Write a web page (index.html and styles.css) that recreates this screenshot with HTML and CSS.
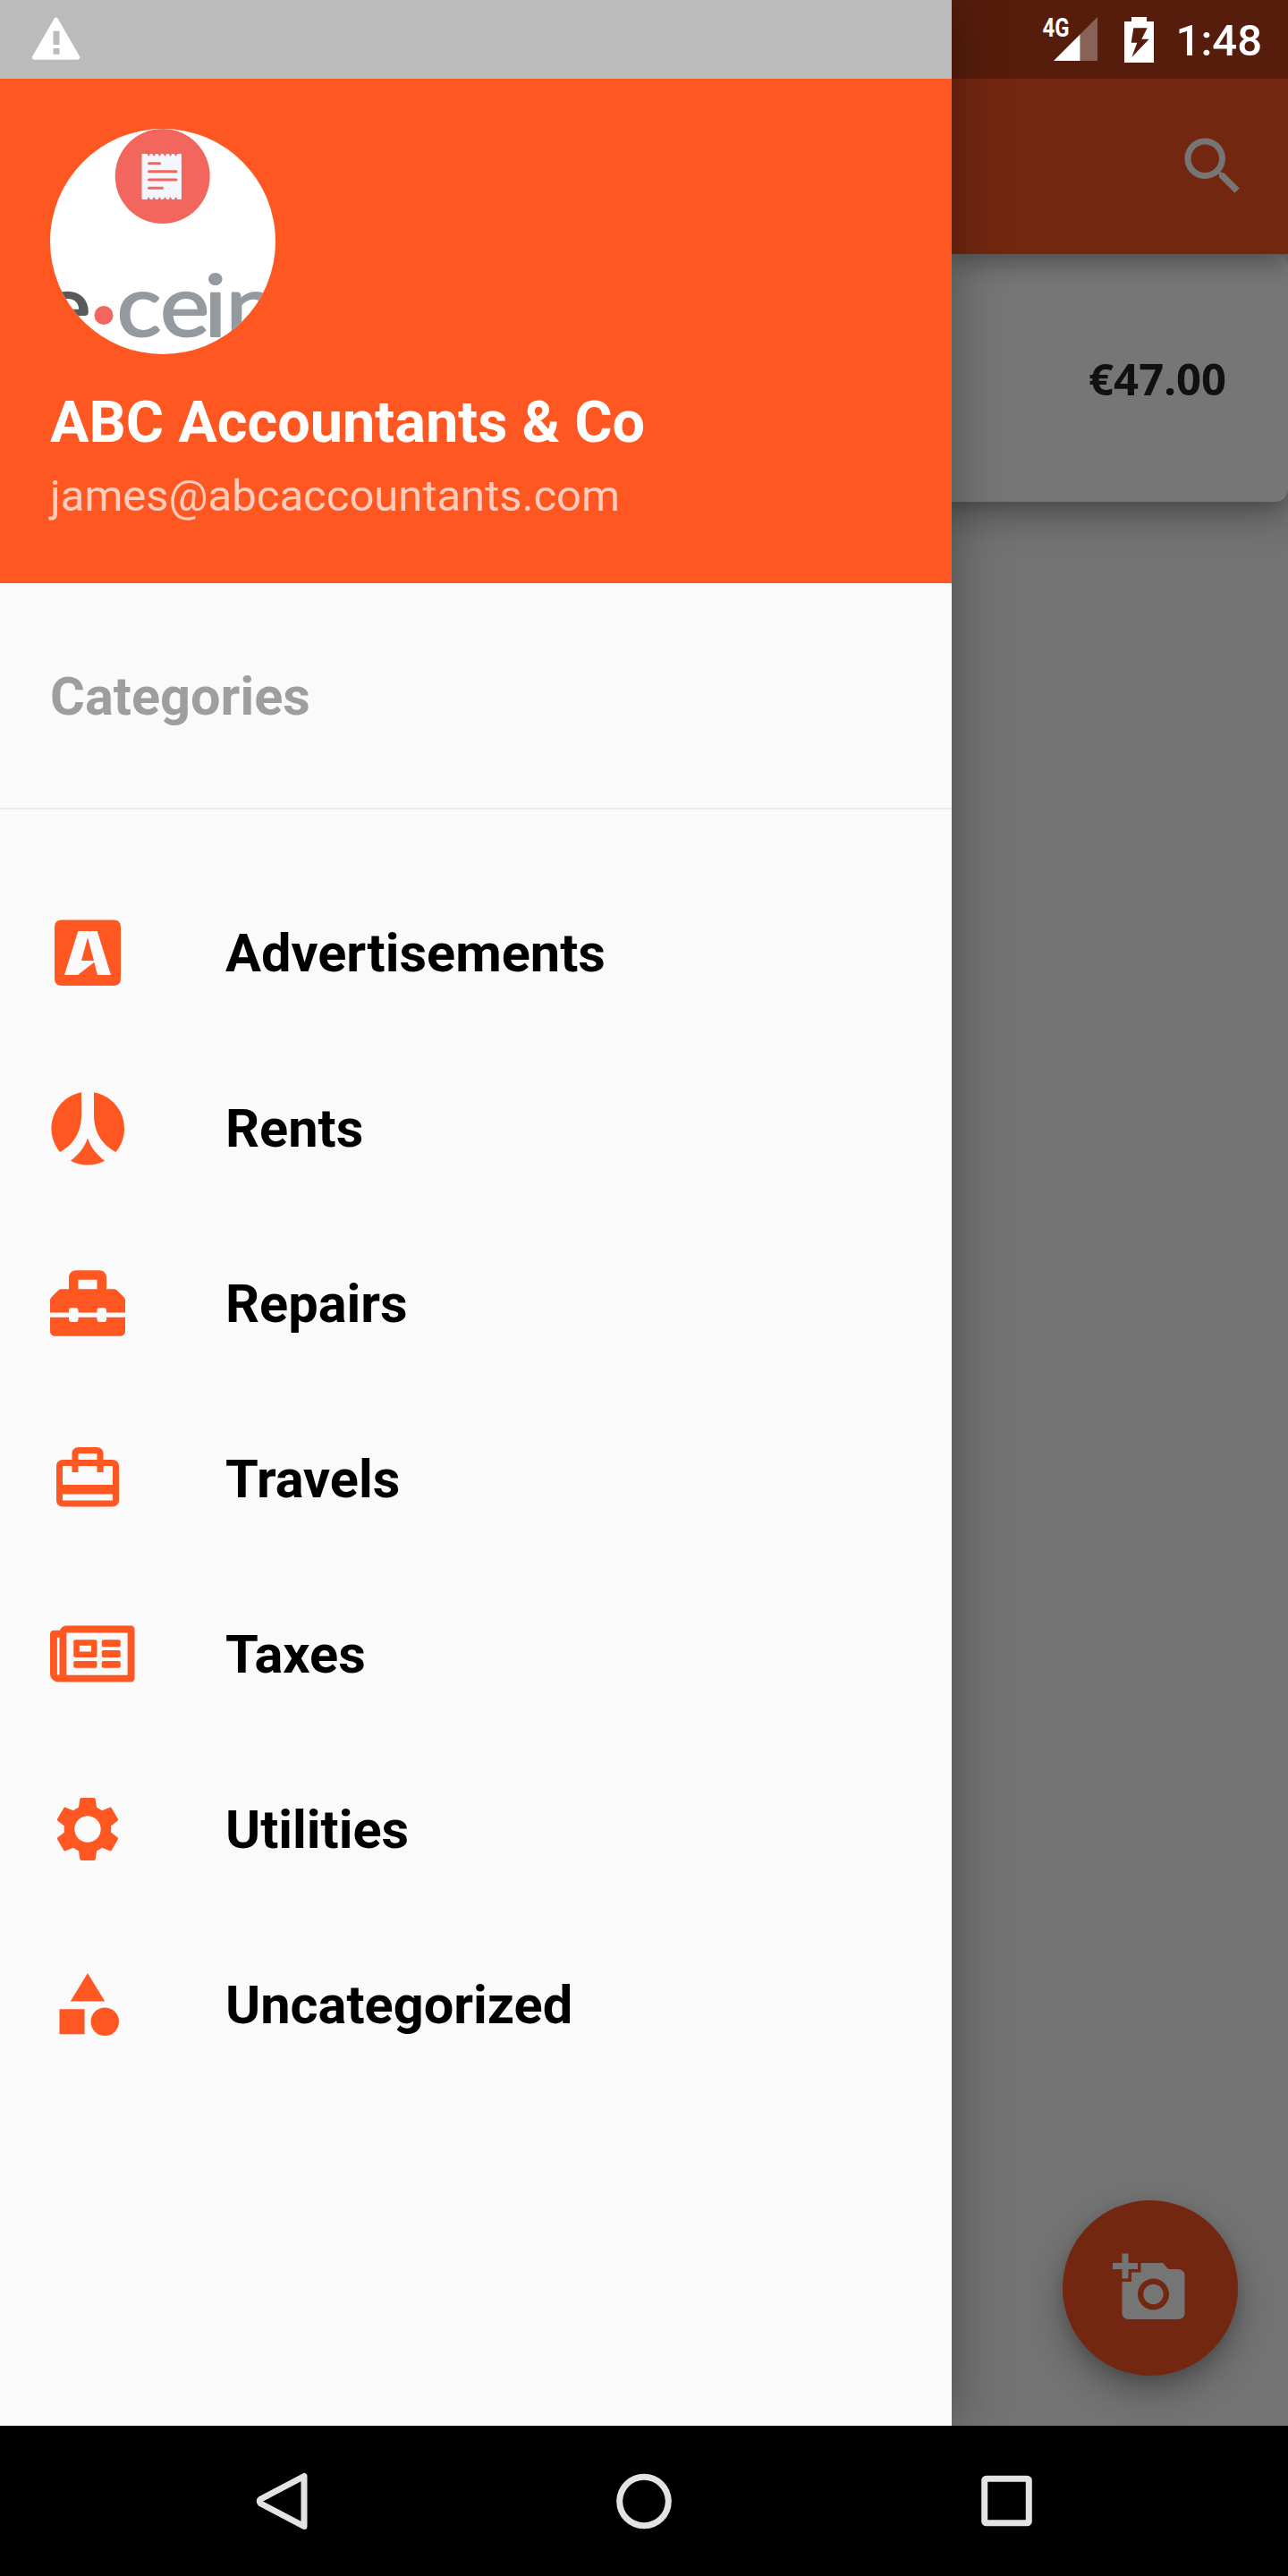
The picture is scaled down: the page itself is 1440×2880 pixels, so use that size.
FILE: index.html
```html
<!DOCTYPE html>
<html lang="en">
<head>
<meta charset="utf-8">
<title>Categories</title>
<link rel="stylesheet" href="styles.css">
</head>
<body>
<div class="screen">
  <div class="stage">
    <aside class="drawer">
      <header class="account">
        <svg class="avatar" viewBox="56 144 252 252">
          <defs><clipPath id="round"><circle cx="182" cy="270" r="126"/></clipPath></defs>
          <circle cx="182" cy="270" r="126" fill="#fff"/>
          <g clip-path="url(#round)">
            <circle cx="181.700" cy="197" r="53" fill="#f2665e"/>
            <path fill="#f3f6fc" d="M159.500 172h5l1.700 3 1.700-3h2.500l1.800 3 1.800-3h2.500l1.800 3 1.800-3h2.500l1.800 3 1.800-3h2.500l1.800 3 1.800-3h2.500l1.800 3 1.700-3h3.600q1 0 1 1v49q0 1-1 1h-3.600l-1.700-3-1.800 3h-2.500l-1.800-3-1.800 3h-2.500l-1.800-3-1.800 3h-2.500l-1.800-3-1.800 3h-2.500l-1.800-3-1.800 3h-2.500l-1.700-3-1.700 3h-5q-1 0-1-1v-49q0-1 1-1z"/>
            <path stroke="#f2665e" stroke-width="3" stroke-linecap="round" d="M166.500 182.700h12M166.500 191.700h30.500M166.500 201h30.500M166.500 210.300h15"/>
            <text class="logo logo-dark" transform="scale(1.1 1)" x="42.300" y="376.500">e</text>
            <circle cx="116" cy="352.500" r="10.500" fill="#f2665e"/>
            <text class="logo" transform="scale(1.1 1)" x="118.700 162.700 207.500 229.600" y="376.500">ceip</text>
          </g>
        </svg>
        <div class="name">ABC Accountants &amp; Co</div>
        <div class="email">james@abcaccountants.com</div>
      </header>
      <h2 class="section">Categories</h2>
      <nav class="list">
        <a class="item"><svg class="icon" viewBox="0 0 84 84"><path fill-rule="evenodd" d="M13 5.500h58q8 0 8 8v57.500q0 8-8 8H13q-8 0-8-8V13.500q0-8 8-8zM31.300 18L16 67h15l18.300-14.300L53 67h15L52.700 18zM42 25.300L49 51H35z"/></svg><span class="label">Advertisements</span></a>
        <a class="item"><svg class="icon" viewBox="0 0 84 84"><path d="M35 2.300V27.500C35 45.500 27 60.500 11 69A41 41 0 0 1 35 2.300zM49 2.300V27.500C49 45.500 57 60.500 73.500 69A41 41 0 0 0 49 2.300zM42 53.500C45 63 52 72 61.200 78.800A41 41 0 0 1 22.800 78.800C32 72 39 63 42 53.500z"/></svg><span class="label">Rents</span></a>
        <a class="item"><svg class="icon" viewBox="0 0 512 512"><path d="M502.630 214.630l-45.250-45.250c-6-6-14.140-9.370-22.630-9.370H384V80c0-26.510-21.490-48-48-48H176c-26.510 0-48 21.490-48 48v80H77.250c-8.490 0-16.620 3.370-22.630 9.370L9.370 214.630c-6 6-9.370 14.140-9.370 22.630V320h128v-16c0-8.840 7.160-16 16-16h32c8.840 0 16 7.160 16 16v16h128v-16c0-8.840 7.160-16 16-16h32c8.840 0 16 7.160 16 16v16h128v-82.750c0-8.480-3.370-16.620-9.370-22.620zM320 160H192V96h128v64zm64 208c0 8.840-7.160 16-16 16h-32c-8.840 0-16-7.160-16-16v-16H192v16c0 8.840-7.160 16-16 16h-32c-8.840 0-16-7.160-16-16v-16H0v96c0 17.670 14.330 32 32 32h448c17.670 0 32-14.330 32-32v-96H384v16z"/></svg><span class="label">Repairs</span></a>
        <a class="item"><svg class="icon" viewBox="0 0 24 24"><path d="M20 6h-3V4c0-1.110-.89-2-2-2H9c-1.110 0-2 .89-2 2v2H4c-1.110 0-2 .89-2 2v11c0 1.110.89 2 2 2h16c1.110 0 2-.89 2-2V8c0-1.110-.89-2-2-2zM9 4h6v2H9V4zm11 15H4v-2h16v2zm0-5H4V8h3v2h2V8h6v2h2V8h3v6z"/></svg><span class="label">Travels</span></a>
        <a class="item"><svg class="icon" viewBox="0 0 512 512"><path d="M552 64H112c-20.858 0-38.643 13.377-45.248 32H24c-13.255 0-24 10.745-24 24v272c0 30.928 25.072 56 56 56h496c13.255 0 24-10.745 24-24V88c0-13.255-10.745-24-24-24zM48 392V144h16v248c0 4.411-3.589 8-8 8s-8-3.589-8-8zm480 8H111.422c.374-2.614.578-5.283.578-8V112h416v288zM172 280h136c6.627 0 12-5.373 12-12v-96c0-6.627-5.373-12-12-12H172c-6.627 0-12 5.373-12 12v96c0 6.627 5.373 12 12 12zm28-80h80v40h-80v-40zm-40 140v-24c0-6.627 5.373-12 12-12h136c6.627 0 12 5.373 12 12v24c0 6.627-5.373 12-12 12H172c-6.627 0-12-5.373-12-12zm192 0v-24c0-6.627 5.373-12 12-12h104c6.627 0 12 5.373 12 12v24c0 6.627-5.373 12-12 12H364c-6.627 0-12-5.373-12-12zm0-144v-24c0-6.627 5.373-12 12-12h104c6.627 0 12 5.373 12 12v24c0 6.627-5.373 12-12 12H364c-6.627 0-12-5.373-12-12zm0 72v-24c0-6.627 5.373-12 12-12h104c6.627 0 12 5.373 12 12v24c0 6.627-5.373 12-12 12H364c-6.627 0-12-5.373-12-12z"/></svg><span class="label">Taxes</span></a>
        <a class="item"><svg class="icon" viewBox="0 0 24 24"><path d="M19.430 12.980c.04-.32.070-.64.070-.98s-.03-.66-.07-.98l2.110-1.650c.19-.15.240-.42.120-.64l-2-3.460c-.12-.22-.39-.3-.61-.22l-2.490 1c-.52-.4-1.080-.73-1.690-.98l-.38-2.650C14.460 2.180 14.250 2 14 2h-4c-.25 0-.46.180-.49.420l-.38 2.650c-.61.250-1.170.590-1.690.980l-2.490-1c-.23-.09-.49 0-.61.220l-2 3.460c-.13.220-.07.490.120.640l2.110 1.650c-.04.320-.07.650-.07.980s.03.660.070.980l-2.110 1.650c-.19.150-.24.420-.12.640l2 3.460c.12.220.39.300.61.220l2.490-1c.52.400 1.080.730 1.690.980l.38 2.650c.03.240.24.420.49.420h4c.25 0 .46-.18.49-.42l.38-2.650c.61-.25 1.170-.59 1.690-.98l2.490 1c.23.090.49 0 .61-.22l2-3.460c.12-.22.070-.49-.12-.64l-2.110-1.650zM12 16.200c-2.320 0-4.200-1.880-4.200-4.200s1.880-4.200 4.200-4.200 4.200 1.880 4.200 4.200-1.880 4.200-4.200 4.200z"/></svg><span class="label">Utilities</span></a>
        <a class="item"><svg class="icon" viewBox="0 0 24 24"><path d="M12 2l-5.500 9h11zM3 13.500h8v8H3z"/><circle cx="17.500" cy="17.500" r="4.500"/></svg><span class="label">Uncategorized</span></a>
      </nav>
    </aside>
    <main class="page">
      <header class="appbar">
        <svg class="glyph" viewBox="0 0 24 24"><path d="M15.500 14h-.79l-.28-.27C15.410 12.590 16 11.110 16 9.500 16 5.910 13.090 3 9.500 3S3 5.910 3 9.500 5.910 16 9.500 16c1.610 0 3.090-.59 4.230-1.570l.27.280v.79l5 4.990L20.490 19l-4.990-5zm-6 0C7.010 14 5 11.990 5 9.500S7.010 5 9.500 5 14 7.010 14 9.500 11.990 14 9.500 14z"/></svg>
      </header>
      <section class="card"><span class="price">€47.00</span></section>
      <button class="fab">
        <svg class="glyph" viewBox="0 0 24 24"><path d="M3 4V1h2v3h3v2H5v3H3V6H0V4h3zm3 6V7h3V4h7l1.830 2H21c1.100 0 2 .9 2 2v12c0 1.100-.9 2-2 2H5c-1.100 0-2-.9-2-2V10h3zm7 9c2.760 0 5-2.240 5-5s-2.240-5-5-5-5 2.240-5 5 2.240 5 5 5zm-3.200-5c0 1.770 1.430 3.200 3.200 3.200s3.200-1.430 3.200-3.200-1.430-3.200-3.200-3.200-3.200 1.430-3.200 3.200z"/></svg>
      </button>
    </main>
    <div class="statusbar">
      <svg class="warning" viewBox="36 19 54 48"><path fill="#fff" fill-rule="evenodd" d="M60.500 21q2-2.800 4.300 0L89 63q.8 3.800-2.500 3.800h-48Q35.300 66.800 36.200 63zM59.500 34.800v15.200h7V34.800zM59.500 54v6.800h7V54z"/></svg>
      <div class="indicators">
        <svg class="signal" viewBox="1154 6 76 76"><path fill="#896257" d="M1207.500 38.500L1227 19v49h-19.500z"/><path fill="#fff" d="M1178 68l29.500-29.500V68z"/><text class="network" x="1165.500" y="41" textLength="30" lengthAdjust="spacingAndGlyphs">4G</text></svg>
        <svg class="battery" viewBox="1257 18 33 51"><path fill="#fff" fill-rule="evenodd" d="M1265 18h17v5h8v46h-33V23h8zM1267.300 30.300l-2.600 16.400h6.600l-6 16.300 19.400-20.300h-8.400l6.400-12.400z"/></svg>
        <span class="time">1:48</span>
      </div>
    </div>
  </div>
  <footer class="navbar">
    <svg class="navicon" viewBox="-36 -36.500 72 72"><path d="M25 -28V28L-23.500 2.500Q-26 0 -23.500 -2.500Z"/></svg>
    <svg class="navicon" viewBox="-36 -36.500 72 72"><circle r="27.300"/></svg>
    <svg class="navicon" viewBox="-36.500 -36 72 72"><rect x="-24.800" y="-24.800" width="49.600" height="49.600" rx="2"/></svg>
  </footer>
</div>
</body>
</html>
```
FILE: styles.css
```css
* { box-sizing: border-box; }
body { margin: 0; font-family: Roboto, sans-serif; }
.screen { width: 1440px; height: 2880px; display: flex; flex-direction: column; background: #000; overflow: hidden; }
.stage { position: relative; height: 2712px; display: flex; overflow: hidden; }

.drawer { position: relative; z-index: 1; width: 1064px; padding-top: 88px; background: #fafafa; box-shadow: 0 0 56px rgba(0, 0, 0, .35); }
.account { height: 563.5px; padding: 56px 56px 0; background: #ff5722; color: #fff; }
.avatar { display: block; width: 252px; height: 252px; }
.logo { font: 400 95px Lato, sans-serif; fill: #949a9f; stroke: #949a9f; stroke-width: 2; stroke-linejoin: round; }
.logo-dark { fill: #58595b; stroke: #58595b; }
.name { margin-top: 38px; font-size: 64.75px; line-height: 76px; font-weight: 700; white-space: nowrap; }
.email { margin-top: 15px; font-size: 49px; line-height: 60px; color: rgba(255, 255, 255, .7); }
.section { margin: 0; height: 253.5px; padding: 92px 56px 0; font-size: 59.5px; line-height: 70px; font-weight: 700; color: #9e9e9e; border-bottom: 2px solid #ebebeb; }
.list { padding-top: 62px; }
.item { height: 196px; padding-left: 56px; display: flex; align-items: center; gap: 112px; font-size: 59.5px; font-weight: 700; color: #000; }
.label { padding-top: 2px; }
.icon { width: 84px; height: 84px; fill: #ff5722; overflow: visible; }

.page { width: 376px; background: #737373; display: flex; flex-direction: column; }
.appbar { position: relative; height: 284px; padding: 88px 42px 0 0; display: flex; align-items: center; justify-content: flex-end; background: #742710; box-shadow: 0 8px 28px rgba(0, 0, 0, .36); }
.glyph { width: 84px; height: 84px; fill: #757575; }
.card { height: 277px; margin-left: -20px; padding-right: 69px; display: flex; align-items: center; justify-content: flex-end; background: #767676; border-radius: 14px; box-shadow: 0 16px 40px rgba(0, 0, 0, .3), 0 6px 14px rgba(0, 0, 0, .1); }
.price { font: 700 49px "Noto Sans", sans-serif; color: #111; }
.fab { width: 196px; height: 196px; margin: auto 56px 56px auto; padding: 0; border: 0; border-radius: 50%; background: #742710; display: flex; align-items: center; justify-content: center; box-shadow: 0 18px 36px rgba(0, 0, 0, .3), 0 4px 14px rgba(0, 0, 0, .1); }

.statusbar { position: absolute; z-index: 2; top: 0; left: 0; width: 1440px; height: 88px; padding: 0 29px 0 36px; display: flex; align-items: center; justify-content: space-between; background: rgba(0, 0, 0, .25); color: #fff; }
.warning { width: 54px; height: 48px; margin-bottom: 2px; }
.indicators { display: flex; align-items: center; }
.signal { width: 76px; height: 76px; margin-right: 27px; }
.battery { width: 33px; height: 51px; margin-right: 25px; }
.network { font: 700 29.5px Roboto, sans-serif; fill: #fff; }
.time { font-size: 49px; line-height: 58px; font-weight: 500; margin-top: 4px; }

.navbar { height: 168px; padding: 0 279px; display: flex; align-items: center; justify-content: space-between; background: #000; }
.navicon { width: 72px; height: 72px; fill: none; stroke: #e3e3e3; stroke-width: 7; stroke-linejoin: round; }
```
